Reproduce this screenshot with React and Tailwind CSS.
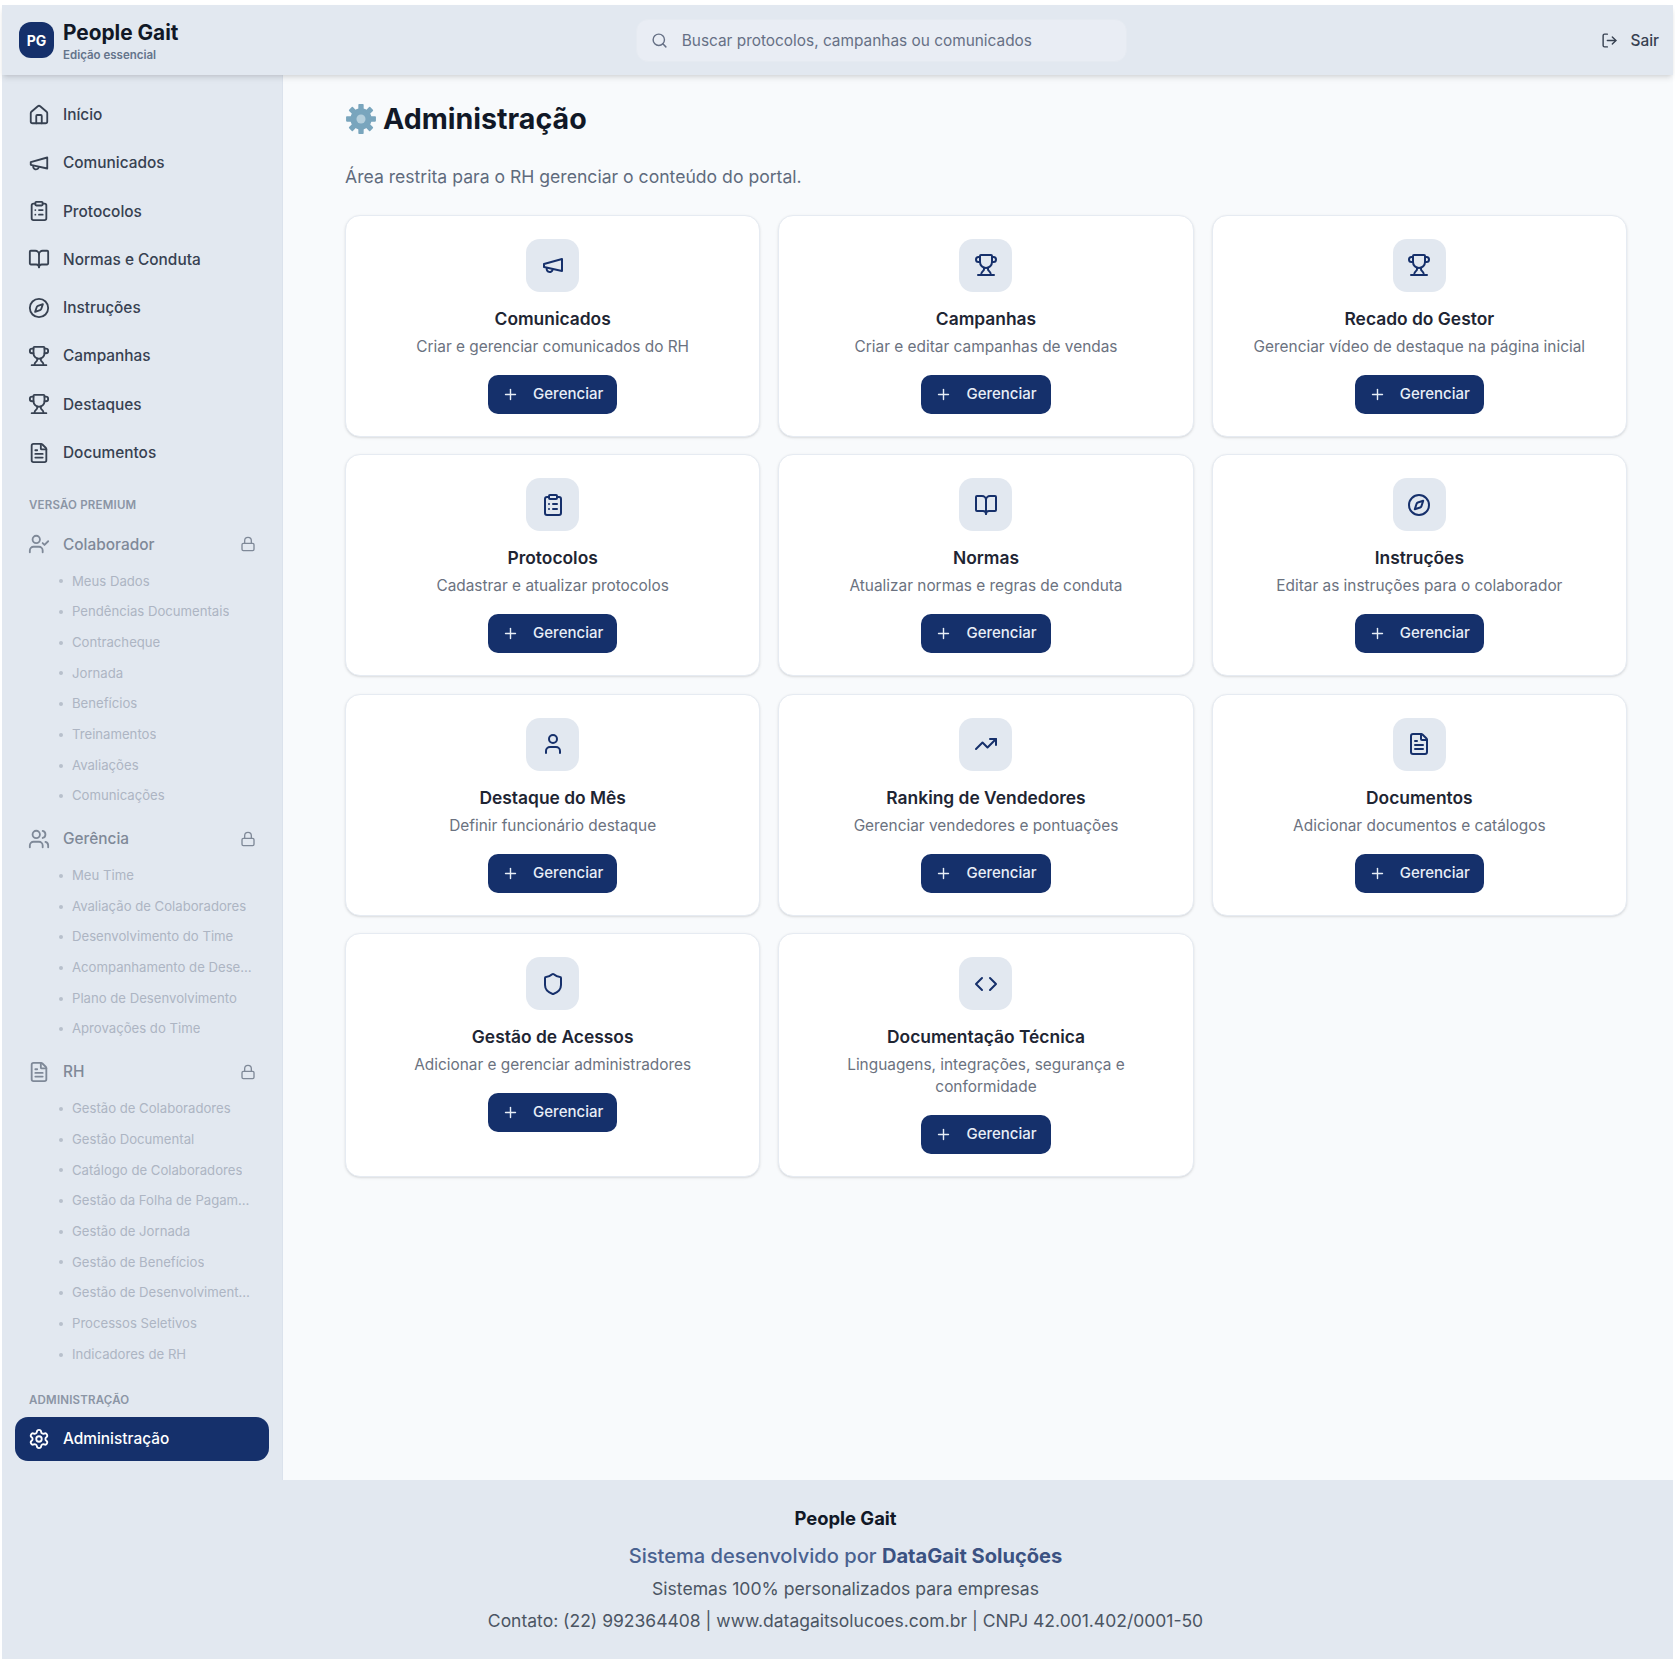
import { House, ClipboardList, BookOpen, Compass, Trophy, FileText, UserCheck, Users, Lock, Settings, Plus, TrendingUp, User, Shield, Code, Search, LogOut } from 'lucide-react';

const inter = { fontFamily: 'Inter, sans-serif' };

// older lucide megaphone, the one in the package has another shape
function Megaphone({ className, strokeWidth = 2 }) {
  return (
    <svg viewBox="0 0 24 24" fill="none" stroke="currentColor" strokeWidth={strokeWidth} strokeLinecap="round" strokeLinejoin="round" className={className}>
      <path d="m3 11 18-5v12L3 14v-3z" />
      <path d="M11.6 16.8a3 3 0 1 1-5.8-1.6" />
    </svg>);
}

const mainNav = [
  { icon: House, label: 'Início' },
  { icon: Megaphone, label: 'Comunicados' },
  { icon: ClipboardList, label: 'Protocolos' },
  { icon: BookOpen, label: 'Normas e Conduta' },
  { icon: Compass, label: 'Instruções' },
  { icon: Trophy, label: 'Campanhas' },
  { icon: Trophy, label: 'Destaques' },
  { icon: FileText, label: 'Documentos' },
];

const premium = [
  { icon: UserCheck, label: 'Colaborador', items: ['Meus Dados', 'Pendências Documentais', 'Contracheque', 'Jornada', 'Benefícios', 'Treinamentos', 'Avaliações', 'Comunicações'] },
  { icon: Users, label: 'Gerência', items: ['Meu Time', 'Avaliação de Colaboradores', 'Desenvolvimento do Time', 'Acompanhamento de Desempenho', 'Plano de Desenvolvimento', 'Aprovações do Time'] },
  { icon: FileText, label: 'RH', items: ['Gestão de Colaboradores', 'Gestão Documental', 'Catálogo de Colaboradores', 'Gestão da Folha de Pagamento', 'Gestão de Jornada', 'Gestão de Benefícios', 'Gestão de Desenvolvimento Humano', 'Processos Seletivos', 'Indicadores de RH'] },
];

const cards = [
  { icon: Megaphone, title: 'Comunicados', desc: 'Criar e gerenciar comunicados do RH' },
  { icon: Trophy, title: 'Campanhas', desc: 'Criar e editar campanhas de vendas' },
  { icon: Trophy, title: 'Recado do Gestor', desc: 'Gerenciar vídeo de destaque na página inicial' },
  { icon: ClipboardList, title: 'Protocolos', desc: 'Cadastrar e atualizar protocolos' },
  { icon: BookOpen, title: 'Normas', desc: 'Atualizar normas e regras de conduta' },
  { icon: Compass, title: 'Instruções', desc: 'Editar as instruções para o colaborador' },
  { icon: User, title: 'Destaque do Mês', desc: 'Definir funcionário destaque' },
  { icon: TrendingUp, title: 'Ranking de Vendedores', desc: 'Gerenciar vendedores e pontuações' },
  { icon: FileText, title: 'Documentos', desc: 'Adicionar documentos e catálogos' },
  { icon: Shield, title: 'Gestão de Acessos', desc: 'Adicionar e gerenciar administradores' },
  { icon: Code, title: 'Documentação Técnica', desc: 'Linguagens, integrações, segurança e conformidade' },
];

function Gear() {
  return (
    <svg viewBox="0 0 24 24" className="w-[32px] h-[32px] mr-[6px] shrink-0">
      <g fill="#79a5bd">
        <circle cx="12" cy="12" r="8" />
        {[0, 45, 90, 135, 180, 225, 270, 315].map(a => <rect key={a} x="10" y="0.8" width="4" height="5" rx="0.6" transform={`rotate(${a} 12 12)`} />)}
      </g>
      <circle cx="12" cy="12" r="3.4" fill="#b5cfdc" />
    </svg>);
}

function NavItem({ icon: Icon, label }) {
  return (
    <div className="flex items-center h-[44px] px-[13px] gap-[13px] text-[15.4px] font-medium text-[#374151]">
      <Icon className="w-[22px] h-[22px] shrink-0" strokeWidth={2} /><span>{label}</span>
    </div>);
}

function PremiumGroup({ icon: Icon, label, items }) {
  return (
    <div>
      <div className="flex items-center h-[44px] px-[13px] gap-[13px] text-[15.4px] font-medium text-[#7f8998]">
        <Icon className="w-[22px] h-[22px] shrink-0" strokeWidth={2} /><span className="flex-1">{label}</span>
        <Lock className="w-[16px] h-[16px]" strokeWidth={2} />
      </div>
      <ul>
        {items.map(t => (
          <li key={t} className="flex items-center h-[30.7px] pl-[44px] pr-[14px] text-[13.15px] text-[#adb5c3]">
            <span className="w-[4px] h-[4px] rounded-full bg-[#b8c0cc] mr-[9px] shrink-0" /><span className="truncate">{t}</span>
          </li>))}
      </ul>
    </div>);
}

function AdminCard({ icon: Icon, title, desc }) {
  return (
    <div className="flex flex-col items-center bg-white border border-[#e6ebf2] rounded-[15px] shadow-sm pt-[23px] pb-[22px] px-[24px] text-center">
      <div className="w-[53px] h-[53px] rounded-[14px] bg-[#e2e8f0] flex items-center justify-center text-[#16306b]"><Icon className="w-[24px] h-[24px]" strokeWidth={2} /></div>
      <h3 className="mt-[13px] mb-[4px] text-[17.4px] leading-[27px] font-semibold text-[#1e2533]">{title}</h3>
      <p className="text-[15.4px] leading-[22px] text-[#6b7280] mb-[17px]">{desc}</p>
      <button className="flex items-center gap-[14px] h-[39px] px-[14px] rounded-[10px] bg-[#15306b] text-[#e8eef7] text-[15px] font-medium"><Plus className="w-[17px] h-[17px]" strokeWidth={2} />Gerenciar</button>
    </div>);
}

export default function App() {
  return (
    <div className="bg-white pt-[5px] pl-[2px] pr-[2px] pb-[2px]" style={inter}>
      <header className="relative z-10 h-[70px] flex items-center justify-between bg-[#e2e8f0] pl-[17px] pr-[14px] shadow-md">
        <div className="flex items-center gap-[9px] w-[300px]">
          <div className="w-[35px] h-[36px] rounded-[12px] bg-[#15306b] text-white flex items-center justify-center text-[14px] font-bold">PG</div>
          <div className="pt-[4px]">
            <div className="text-[20.8px] leading-[24px] font-bold text-[#111827]">People Gait</div>
            <div className="mt-[3px] text-[11.5px] leading-[15px] font-semibold text-[#64748b]">Edição essencial</div>
          </div>
        </div>
        <div className="flex items-center w-[491px] h-[43px] mt-[1px] rounded-[12px] bg-[#e9edf4] border border-[#e5eaf1] pl-[14px] gap-[14px] text-[15.4px] text-[#667085] mr-[158px]">
          <Search className="w-[17px] h-[17px] shrink-0" strokeWidth={2} />Buscar protocolos, campanhas ou comunicados
        </div>
        <div className="flex items-center gap-[12px] mt-[1px] text-[15.4px] font-medium text-[#374151]"><LogOut className="w-[17px] h-[17px]" strokeWidth={2} />Sair</div>
      </header>
      <div className="flex">
        <aside className="w-[281px] shrink-0 bg-[#e2e8f0] border-r border-[#dbe2ec] pt-[17.5px] pb-[19px] pl-[13px] pr-[13px]">
          <nav className="flex flex-col gap-[4.3px]">
            {mainNav.map(n => <NavItem key={n.label} {...n} />)}
          </nav>
          <div className="mt-[22px] mb-[9.5px] pl-[14px] text-[11.5px] leading-[16px] font-semibold uppercase tracking-[0.2px] text-[#8b95a5]">Versão Premium</div>
          <div className="flex flex-col gap-[5px]">
            {premium.map(g => <PremiumGroup key={g.label} {...g} />)}
          </div>
          <div className="mt-[22px] mb-[9px] pl-[14px] text-[11.5px] leading-[16px] font-semibold uppercase tracking-[0.2px] text-[#8b95a5]">Administração</div>
          <div className="flex items-center h-[44px] px-[13px] gap-[13px] rounded-[13px] bg-[#15306b] text-white text-[15.4px] font-medium"><Settings className="w-[22px] h-[22px]" strokeWidth={2} />Administração</div>
        </aside>
        <main className="flex-1 bg-[#f8fafc] pl-[62px] pr-[46px] pt-[24px]">
          <h1 className="flex items-center text-[28.6px] leading-[40px] font-bold text-[#111827]"><Gear />Administração</h1>
          <p className="mt-[24.5px] mb-[25px] text-[17.6px] leading-[26px] text-[#5f6b7d]">Área restrita para o RH gerenciar o conteúdo do portal.</p>
          <div className="grid grid-cols-3 gap-x-[18px] gap-y-[17.5px]">
            {cards.map(c => <AdminCard key={c.title + c.desc} {...c} />)}
          </div>
        </main>
      </div>
      <footer className="h-[179px] bg-[#e2e8f0] pl-[16px] pt-[25px] text-center">
        <div className="text-[18.4px] leading-[26px] font-bold text-[#111827]">People Gait</div>
        <div className="mt-[11px] text-[20.1px] leading-[28px] font-medium text-[#4a6290]">Sistema desenvolvido por <span className="font-bold text-[#3b5282]">DataGait Soluções</span></div>
        <div className="mt-[5px] text-[17.6px] leading-[28px] text-[#4b5563]">Sistemas 100% personalizados para empresas</div>
        <div className="mt-[4px] text-[17.5px] leading-[28px] text-[#4b5563]">Contato: (22) 992364408 | www.datagaitsolucoes.com.br | CNPJ 42.001.402/0001-50</div>
      </footer>
    </div>);
}
